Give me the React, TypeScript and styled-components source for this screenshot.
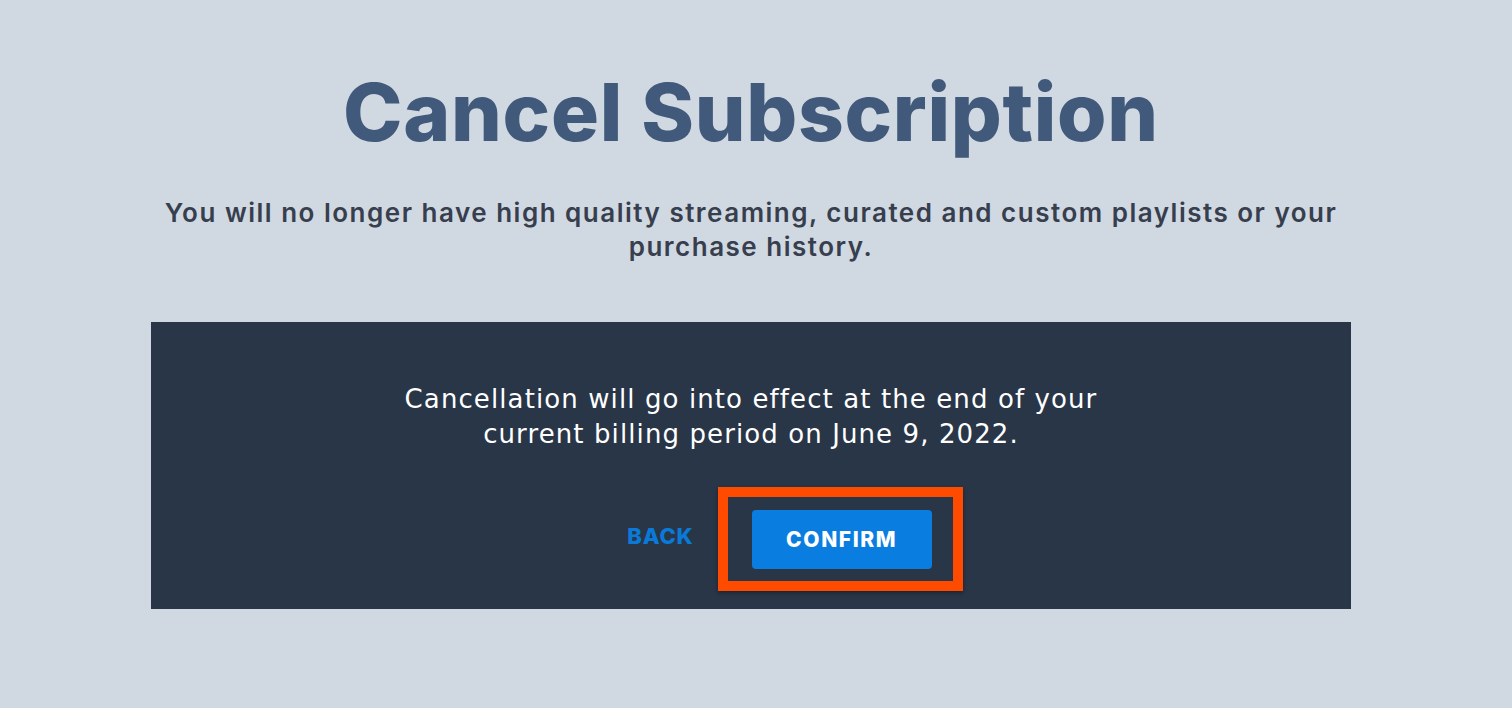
import React from "react";
import styled, { createGlobalStyle } from "styled-components";

const GlobalStyle = createGlobalStyle`
  html, body {
    margin: 0;
    padding: 0;
    background: #d0d8e2;
    font-family: Inter, "Noto Sans", sans-serif;
  }
  * { box-sizing: border-box; }
`;

const App = () => {
  return (
    <>
      <GlobalStyle />
      <Page>
        <Title>Cancel Subscription</Title>
        <Subtitle>
          You will no longer have high quality streaming, curated and custom playlists or your purchase history.
        </Subtitle>
        <Panel>
          <Notice>
            Cancellation will go into effect at the end of your current billing period on June 9, 2022.
          </Notice>
          <Actions>
            <BackLink href="#">BACK</BackLink>
            <Highlighted>
              <ConfirmButton type="button">CONFIRM</ConfirmButton>
              <Marker />
            </Highlighted>
          </Actions>
        </Panel>
      </Page>
    </>
  );
};

export default App;

const Page = styled.main`
  width: 100%;
  min-height: 708px;
  display: flex;
  flex-direction: column;
  align-items: center;
  padding: 62px 10px 0 0;
`
const Title = styled.h1`
  margin: 0;
  color: #41597a;
  font-family: Inter, sans-serif;
  font-size: 80px;
  font-weight: 800;
  line-height: 100px;
  letter-spacing: 0.7px;
`
const Subtitle = styled.p`
  margin: 34px 0 0;
  width: 1200px;
  padding: 0 10px;
  text-align: center;
  color: #373e4d;
  font-size: 26px;
  font-weight: 600;
  line-height: 34px;
  letter-spacing: 1.5px;
`
const Panel = styled.section`
  margin-top: 58px;
  width: 1200px;
  height: 287px;
  background: #293648;
  display: flex;
  flex-direction: column;
  align-items: center;
  padding-top: 60px;
`
const Notice = styled.p`
  margin: 0;
  max-width: 720px;
  text-align: center;
  color: #ffffff;
  font-family: "DejaVu Sans", sans-serif;
  font-size: 26px;
  font-weight: 400;
  line-height: 35px;
  letter-spacing: 1.1px;
`
const Actions = styled.div`
  margin-top: 58px;
  padding-left: 57px;
  display: flex;
  align-items: center;
  gap: 58px;
`
const BackLink = styled.a`
  color: #0a7ad9;
  font-size: 22px;
  font-weight: 800;
  letter-spacing: 0.8px;
  text-decoration: none;
  margin-top: -7px;
`
const Highlighted = styled.div`
  position: relative;
`
const ConfirmButton = styled.button`
  width: 180px;
  height: 59px;
  border: none;
  border-radius: 4px;
  background: #0a7de0;
  color: #ffffff;
  font-family: Inter, sans-serif;
  font-size: 21px;
  font-weight: 800;
  letter-spacing: 1.6px;
  cursor: pointer;
`
const Marker = styled.div`
  position: absolute;
  left: -34px;
  right: -31px;
  top: -23px;
  bottom: -22px;
  border: 10px solid #ff4b00;
  box-shadow: 0 2px 4px rgba(0, 0, 0, 0.35);
  pointer-events: none;
`
